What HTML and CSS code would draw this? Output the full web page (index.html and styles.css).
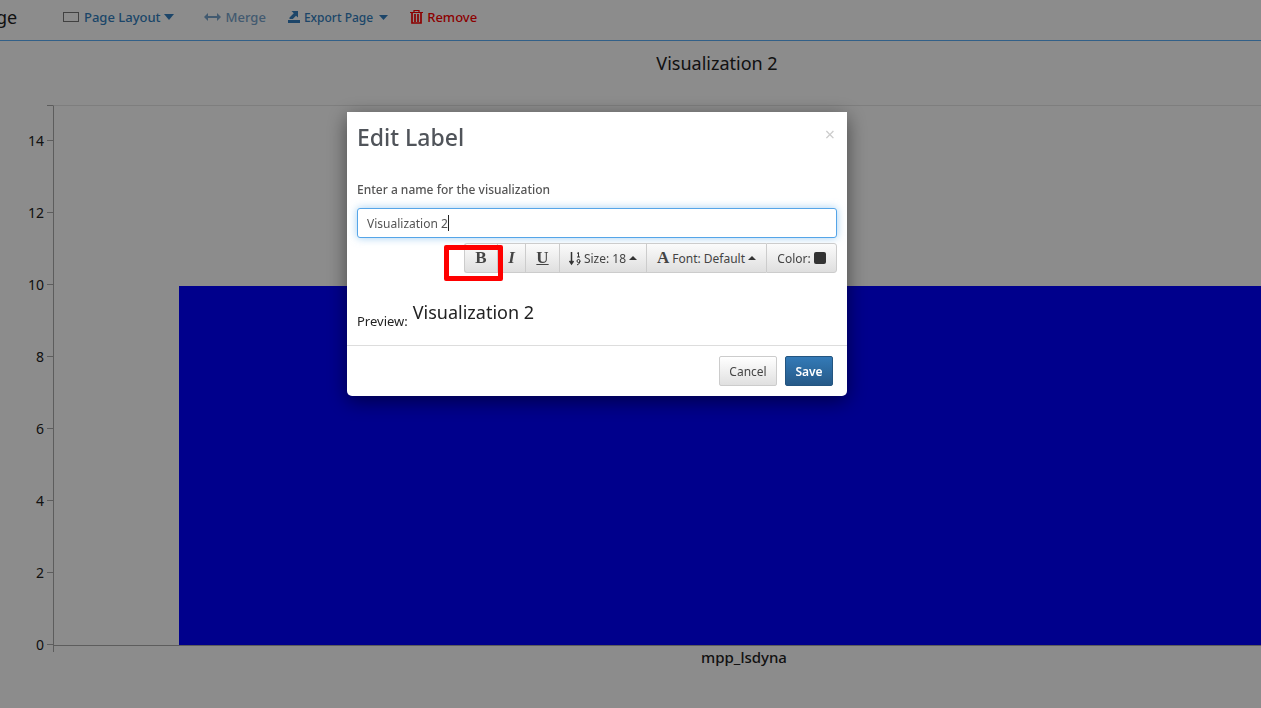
FILE: index.html
```html
<!DOCTYPE html>
<html lang="en">
<head>
    <meta charset="UTF-8">
    <meta name="viewport" content="width=device-width, initial-scale=1.0">
    <title>Edit Label</title>
    <link rel="stylesheet" href="styles.css">
</head>
<body>
    <header class="toolbar">
        <span class="page-name">ge</span>
        <button type="button" class="tool layout">
            <svg width="16" height="10" viewBox="0 0 16 10"><rect x="0.5" y="0.5" width="15" height="9" fill="none" stroke="#777"/></svg>
            Page Layout<svg class="caret" width="10" height="6" viewBox="0 0 10 6"><path d="M0 0h10L5 6z" fill="currentColor"/></svg>
        </button>
        <button type="button" class="tool merge" disabled>
            <svg width="17" height="8" viewBox="0 0 17 8"><path d="M0 4l4-4v3h9V0l4 4-4 4V5H4v3z" fill="currentColor"/></svg>
            Merge
        </button>
        <button type="button" class="tool export">
            <svg width="12" height="12" viewBox="0 0 12 12"><path d="M0 9h12v3H0zM3.500 0H10v6.500L8 4.800 4.800 8H1.500V6.500L5.800 2.200z" fill="currentColor"/></svg>
            Export Page
            <svg class="caret" width="9" height="5" viewBox="0 0 9 5"><path d="M0 0h9L4.500 5z" fill="currentColor"/></svg>
        </button>
        <button type="button" class="tool remove">
            <svg width="13" height="14" viewBox="0 0 13 14" fill="none" stroke="currentColor"><path d="M0 2.500h13M4 2V.5h5V2" stroke-width="1.200"/><path d="M2 3v10h9V3M5 4v8M8 4v8" stroke-width="1.700"/></svg>
            Remove
        </button>
    </header>

    <main class="chart">
        <h2 class="chart-title">Visualization 2</h2>
        <div class="chart-body">
            <ul class="y-axis">
                <li>14</li>
                <li>12</li>
                <li>10</li>
                <li>8</li>
                <li>6</li>
                <li>4</li>
                <li>2</li>
                <li>0</li>
            </ul>
            <div class="plot-column">
                <div class="plot">
                    <div class="bar" style="height: 66.67%"></div>
                </div>
                <div class="x-label">mpp_lsdyna</div>
            </div>
        </div>
    </main>

    <div class="backdrop">
        <form class="modal" role="dialog" aria-labelledby="modal-title">
            <div class="modal-header">
                <h1 id="modal-title">Edit Label</h1>
                <button type="button" class="close" aria-label="Close">&times;</button>
            </div>
            <div class="modal-body">
                <label for="name">Enter a name for the visualization</label>
                <div class="field">
                    <input type="text" id="name" value="Visualization 2">
                    <span class="cursor"></span>
                </div>
                <div class="format-row">
                    <div class="format-group">
                        <button type="button" class="format bold">B</button>
                        <button type="button" class="format italic">I</button>
                        <button type="button" class="format underline">U</button>
                        <button type="button" class="format size">
                            <svg width="12" height="15" viewBox="0 0 12 15"><path d="M2.500 1v11M.5 10L2.500 13l2-3" fill="none" stroke="#333" stroke-width="1.500"/><path d="M8 2.500l1.500-1V6M8 6h3" fill="none" stroke="#333"/><circle cx="9.500" cy="10" r="1.500" fill="none" stroke="#333"/><path d="M11 10q0 3-3 4" fill="none" stroke="#333"/></svg>
                            Size: 18
                            <svg width="8" height="4" viewBox="0 0 8 4"><path d="M0 4h8L4 0z" fill="#333"/></svg>
                        </button>
                        <button type="button" class="format font">
                            <span class="font-icon">A</span>
                            Font: Default
                            <svg width="8" height="4" viewBox="0 0 8 4"><path d="M0 4h8L4 0z" fill="#333"/></svg>
                        </button>
                        <button type="button" class="format color">Color: <span class="swatch"></span></button>
                        <span class="highlight"></span>
                    </div>
                </div>
                <div class="preview">
                    <span>Preview:</span>
                    <span class="preview-text">Visualization 2</span>
                </div>
            </div>
            <div class="modal-footer">
                <button type="button" class="btn">Cancel</button>
                <button type="submit" class="btn primary">Save</button>
            </div>
        </form>
    </div>
</body>
</html>
```
FILE: styles.css
```css
* {
    box-sizing: border-box;
}
body {
    margin: 0;
    min-height: 100vh;
    background: #fff;
    font-family: "Noto Sans", "Open Sans", sans-serif;
    font-size: 12px;
    color: #222;
}
button {
    font-family: inherit;
    margin: 0;
    cursor: pointer;
}

/* top toolbar */
.toolbar {
    display: flex;
    align-items: center;
    height: 41px;
    padding-bottom: 6px;
    border-bottom: 1px solid #5cb0f8;
    overflow: hidden;
}
.page-name {
    width: 63px;
    text-indent: -4px;
    font-size: 18px;
}
.tool {
    display: flex;
    align-items: center;
    gap: 5px;
    padding: 0;
    border: 0;
    background: none;
    color: #337fc0;
    font-size: 13px;
    font-weight: 500;
}
.layout .caret {
    margin-left: -2px;
}
.merge {
    margin-left: 30px;
    color: #78a4cc;
}
.export {
    margin-left: 22px;
    gap: 4px;
    font-size: 12px;
}
.export .caret {
    margin-left: 2px;
}
.remove {
    margin-left: 22px;
    gap: 4px;
    color: #ff0000;
}

/* bar chart, the bar runs on to the right edge */
.chart-title {
    height: 64px;
    margin: 0;
    padding-left: 173px;
    line-height: 44px;
    font-size: 18px;
    font-weight: 400;
    text-align: center;
}
.chart-body {
    display: grid;
    grid-template-columns: 53px 1fr;
}
.y-axis {
    margin: 0;
    padding: 0;
    list-style: none;
    background: linear-gradient(#aaa, #aaa) right top / 6px 1px no-repeat;
}
.y-axis li {
    display: flex;
    align-items: center;
    justify-content: flex-end;
    gap: 3px;
    height: 72px;
    line-height: 20px;
    padding-bottom: 1px;
    font-size: 14px;
}
.y-axis li::after {
    content: "";
    width: 6px;
    height: 1px;
    background: #aaa;
}
.plot {
    display: grid;
    grid-template-columns: 125px 1fr;
    align-items: end;
    height: 541px;
    border-top: 1px solid #e6e6e6;
    border-left: 1px solid #aaa;
    border-bottom: 1px solid #aaa;
}
.bar {
    grid-column: 2;
    background: #00f;
}
.x-label {
    height: 6px;
    padding-left: 173px;
    border-left: 1px solid #aaa;
    line-height: 22px;
    font-size: 15px;
    font-weight: 500;
    text-align: center;
}

/* dialog */
.backdrop {
    position: fixed;
    inset: 0;
    display: flex;
    justify-content: center;
    align-items: flex-start;
    padding: 112px 67px 0 0;
    background: rgba(0, 0, 0, 0.45);
}
.modal {
    width: 500px;
    border-radius: 0 0 5px 5px;
    background: #fff;
    box-shadow: 0 5px 20px rgba(0, 0, 0, 0.5);
}
.modal-header {
    display: flex;
    justify-content: space-between;
    align-items: flex-start;
    padding: 9px 12px 0 10px;
}
.modal-header h1 {
    margin: 0;
    line-height: 32px;
    font-size: 23px;
    font-weight: 500;
    color: #50545a;
}
.close {
    padding: 0;
    border: 0;
    background: none;
    line-height: 26px;
    font-size: 18px;
    color: #ccc;
}
.modal-body {
    padding: 26px 10px 0;
}
.modal-body label {
    display: block;
    line-height: 22px;
    font-weight: 500;
    color: #555;
}
.field {
    position: relative;
    margin-top: 7px;
}
.field input {
    display: block;
    width: 100%;
    height: 30px;
    padding: 0 9px;
    border: 1px solid #55a5e8;
    border-radius: 3px;
    outline: 0;
    box-shadow: 0 0 8px rgba(102, 175, 233, 0.6);
    font-family: inherit;
    font-size: 12px;
    color: #555;
}
.cursor {
    position: absolute;
    left: 91px;
    top: 7px;
    width: 1px;
    height: 16px;
    background: #222;
}
.format-row {
    display: flex;
    justify-content: flex-end;
    margin-top: 5px;
}
.format-group {
    position: relative;
    display: flex;
}
.format {
    display: flex;
    align-items: center;
    justify-content: center;
    gap: 3px;
    width: 34px;
    height: 30px;
    padding: 0;
    border: 1px solid #ccc;
    border-right-width: 0;
    background: linear-gradient(#fbfbfb, #dfdfdf);
    font-size: 12px;
    color: #444;
}
.bold, .italic, .underline {
    font-family: "Liberation Serif", serif;
    font-size: 17px;
    font-weight: bold;
}
.bold {
    width: 33px;
    border-radius: 3px 0 0 3px;
}
.italic {
    width: 28px;
    font-style: italic;
}
.underline {
    text-decoration: underline;
}
.size {
    width: 87px;
}
.font {
    width: 120px;
}
.font-icon {
    font-family: "Liberation Serif", serif;
    font-size: 17px;
    font-weight: bold;
}
.color {
    width: 71px;
    border-right-width: 1px;
    border-radius: 0 3px 3px 0;
}
.swatch {
    width: 12px;
    height: 12px;
    border-radius: 2px;
    background: #333;
}
.highlight {
    position: absolute;
    left: -20px;
    top: 2px;
    width: 59px;
    height: 36px;
    border: 5px solid #f00;
    border-radius: 2px;
}
.preview {
    display: flex;
    gap: 5px;
    height: 72px;
    padding-top: 26px;
    line-height: 44px;
    font-size: 13px;
}
.preview-text {
    line-height: 27px;
    font-size: 18px;
}
.modal-footer {
    display: flex;
    justify-content: flex-end;
    gap: 8px;
    padding: 10px 14px;
    border-top: 1px solid #ddd;
}
.btn {
    width: 58px;
    height: 30px;
    padding: 0;
    border: 1px solid #ccc;
    border-radius: 2px;
    background: linear-gradient(#fff, #e0e0e0);
    font-size: 12px;
    color: #444;
}
.primary {
    width: 48px;
    border-color: #245580;
    background: linear-gradient(#337ab7, #265a88);
    font-weight: 600;
    color: #fff;
}
```
